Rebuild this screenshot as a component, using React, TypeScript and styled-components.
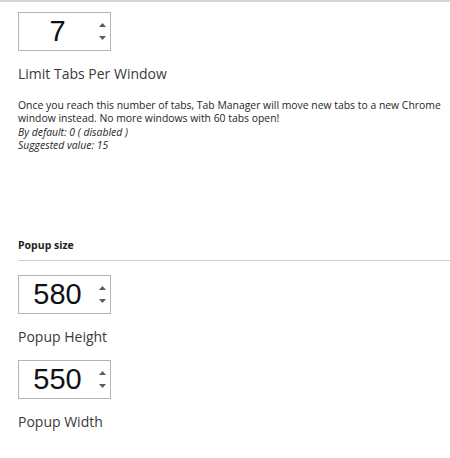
import React from "react";
import styled, { createGlobalStyle } from "styled-components";

const GlobalStyle = createGlobalStyle`
  body {
    margin: 0;
    background: #ffffff;
    font-family: "Open Sans", "Noto Sans", Arial, sans-serif;
    color: #333333;
  }
`;

const Page = styled.div`
  border-top: 2px solid #d6d6d6;
  padding: 10px 0 0 18px;
`;

const Section = styled.div`
  display: flex;
  flex-direction: column;
`;

const NumberBox = styled.div`
  box-sizing: border-box;
  width: 93px;
  height: 39px;
  border: 1px solid #b4b4b4;
  display: flex;
  align-items: center;
`;

const NumberValue = styled.span`
  flex: 1;
  text-align: center;
  font-family: "Liberation Sans", Arial, sans-serif;
  font-size: 29px;
  line-height: 1;
  color: #111111;
  padding-left: 1px;
`;

const Spinner = styled.div`
  width: 14px;
  display: flex;
  flex-direction: column;
  align-items: center;
  gap: 9px;
  margin-right: 1px;
`;

const Label = styled.div`
  margin-top: 13px;
  font-size: 14px;
  line-height: 20px;
  color: #3a3a3a;
`;

const Description = styled.div`
  margin-top: 15px;
  font-size: 10.4px;
  line-height: 13.4px;
  color: #262626;
  padding-right: 4px;
`;

const Note = styled.div`
  font-style: italic;
`;

const GroupTitle = styled.div`
  margin-top: 85px;
  font-size: 10.5px;
  font-weight: 700;
  line-height: 14px;
  color: #1e1e1e;
  padding-bottom: 8px;
  border-bottom: 1px solid #cfcfcf;
  margin-bottom: 14px;
`;

const Stack = styled.div`
  display: flex;
  flex-direction: column;
  gap: 13px;
`;

const Arrow = ({ down }: { down?: boolean }) => (
  <svg width="7" height="4" viewBox="0 0 7 4">
    <path d={down ? "M0 0 L7 0 L3.5 4 Z" : "M0 4 L7 4 L3.5 0 Z"} fill="#5a5a5a" />
  </svg>
);

const NumberField = ({ value }: { value: number }) => (
  <NumberBox>
    <NumberValue>{value}</NumberValue>
    <Spinner>
      <Arrow />
      <Arrow down />
    </Spinner>
  </NumberBox>
);

const Field = ({ value, label }: { value: number; label: string }) => (
  <Section>
    <NumberField value={value} />
    <Label>{label}</Label>
  </Section>
);

export default function App() {
  return (
    <>
      <GlobalStyle />
      <Page>
        <Field value={7} label="Limit Tabs Per Window" />
        <Description>
          Once you reach this number of tabs, Tab Manager will move new tabs to a new Chrome
          window instead. No more windows with 60 tabs open!
          <Note>By default: 0 ( disabled )</Note>
          <Note>Suggested value: 15</Note>
        </Description>
        <GroupTitle>Popup size</GroupTitle>
        <Stack>
          <Field value={580} label="Popup Height" />
          <Field value={550} label="Popup Width" />
        </Stack>
      </Page>
    </>
  );
}
